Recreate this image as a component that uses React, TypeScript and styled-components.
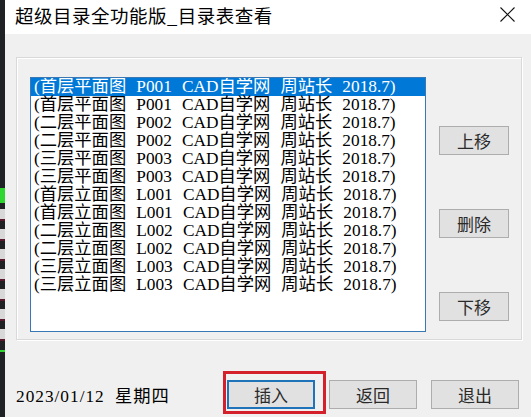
import React from "react";
import styled, { createGlobalStyle } from "styled-components";

const GlobalStyle = createGlobalStyle`
  html, body { margin: 0; padding: 0; background: #f0f0f0; }
  body { font-family: "Noto Sans CJK SC", sans-serif; }
`;

const Root = styled.div`
  display: flex;
  width: 531px;
  height: 417px;
  overflow: hidden;
`;

const BackStrip = styled.div`
  flex: none;
  width: 5px;
  background:
    linear-gradient(#2fd62f, #2fd62f) 0 188px / 5px 15px no-repeat,
    linear-gradient(#2fd62f, #2fd62f) 0 350px / 5px 2px no-repeat,
    repeating-linear-gradient(
      to bottom,
      transparent 0 4px,
      #d8d8d8 4px 14px,
      #5a1c2c 14px 16px,
      transparent 16px 20px
    ) 0 205px / 5px 140px no-repeat,
    #1f2124;
`;

const Window = styled.div`
  flex: 1;
  display: flex;
  flex-direction: column;
  background: #f0f0f0;
`;

const TitleBar = styled.div`
  flex: none;
  height: 34px;
  box-sizing: border-box;
  background: #ffffff;
  display: flex;
  align-items: flex-start;
  justify-content: space-between;
  padding: 2px 16px 0 10px;
`;

const Title = styled.div`
  font: 18.5px/26px "Noto Sans CJK SC", sans-serif;
  letter-spacing: 0.5px;
  color: #000;
`;

const CloseIcon = styled.svg`
  margin-top: 5px;
  width: 15px;
  height: 15px;
`;

const Frame = styled.div`
  flex: none;
  margin: 23px 9px 0 11px;
  height: 283px;
  box-sizing: border-box;
  border: 1px solid #d9d9d9;
  box-shadow: inset 1px 1px 0 #fff, 1px 1px 0 #fff;
  display: flex;
  align-items: flex-start;
  padding: 19px 0 0 13px;
  gap: 13px;
`;

const ListBox = styled.div`
  flex: none;
  width: 396px;
  height: 255px;
  box-sizing: border-box;
  border: 1px solid #3a78b5;
  background: #fff;
  overflow: hidden;
`;

const Row = styled.div<{ $selected?: boolean }>`
  height: 18px;
  line-height: 18px;
  padding-left: 3px;
  white-space: pre;
  font-family: "Liberation Serif", "Noto Sans CJK SC", serif;
  font-size: 17.3px;
  word-spacing: 5.8px;
  color: ${(p) => (p.$selected ? "#ffffff" : "#000000")};
  background: ${(p) => (p.$selected ? "#0078d7" : "transparent")};
`;

const SideColumn = styled.div`
  display: flex;
  flex-direction: column;
  gap: 54px;
  padding-top: 49px;
`;

const Button = styled.button<{ $wide?: boolean; $focused?: boolean; $marked?: boolean }>`
  position: relative;
  width: ${(p) => (p.$wide ? "88px" : "70px")};
  height: 29px;
  box-sizing: border-box;
  padding: 0;
  background: #e1e1e1;
  border: ${(p) => (p.$focused ? "2px solid #1f73b8" : "1px solid #adadad")};
  font: 17px/1 "Noto Sans CJK SC", sans-serif;
  color: #2a2a2a;

  &::after {
    content: "";
    display: ${(p) => (p.$marked ? "block" : "none")};
    position: absolute;
    top: -11px;
    left: -6px;
    right: -13px;
    bottom: -7px;
    border: 3px solid #d3202b;
  }
`;

const Footer = styled.div`
  display: flex;
  align-items: center;
  padding: 40px 12px 0 11px;
`;

const DateText = styled.div`
  font-family: "Liberation Serif", "Noto Sans CJK SC", serif;
  font-size: 17.3px;
  letter-spacing: 1px;
  word-spacing: 5px;
  color: #000;
  white-space: pre;
`;

const ButtonGroup = styled.div`
  margin-left: auto;
  display: flex;
  gap: 14px;
`;

const rows: [string, string][] = [
  ["首层平面图", "P001"],
  ["首层平面图", "P001"],
  ["二层平面图", "P002"],
  ["二层平面图", "P002"],
  ["三层平面图", "P003"],
  ["三层平面图", "P003"],
  ["首层立面图", "L001"],
  ["首层立面图", "L001"],
  ["二层立面图", "L002"],
  ["二层立面图", "L002"],
  ["三层立面图", "L003"],
  ["三层立面图", "L003"],
];

export default function App() {
  return (
    <>
      <GlobalStyle />
      <Root>
        <BackStrip />
        <Window>
          <TitleBar>
            <Title>超级目录全功能版_目录表查看</Title>
            <CloseIcon viewBox="0 0 15 15">
              <path d="M0.5 0.5 L14.5 14.5 M14.5 0.5 L0.5 14.5" stroke="#111" strokeWidth="1.1" fill="none" />
            </CloseIcon>
          </TitleBar>
          <Frame>
            <ListBox>
              {rows.map(([name, code], i) => (
                <Row key={i} $selected={i === 0}>
                  {`(${name} ${code} CAD自学网 周站长 2018.7)`}
                </Row>
              ))}
            </ListBox>
            <SideColumn>
              <Button>上移</Button>
              <Button>删除</Button>
              <Button>下移</Button>
            </SideColumn>
          </Frame>
          <Footer>
            <DateText>2023/01/12 星期四</DateText>
            <ButtonGroup>
              <Button $wide $focused $marked>插入</Button>
              <Button $wide>返回</Button>
              <Button $wide>退出</Button>
            </ButtonGroup>
          </Footer>
        </Window>
      </Root>
    </>
  );
}
